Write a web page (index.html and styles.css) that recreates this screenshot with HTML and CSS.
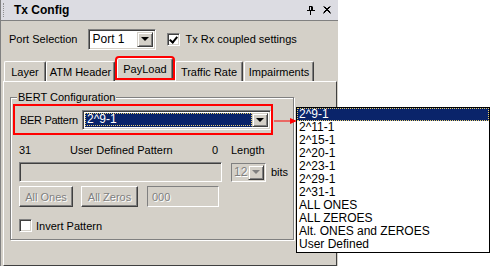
FILE: index.html
```html
<!DOCTYPE html>
<html lang="en">
<head>
    <meta charset="UTF-8">
    <title>Tx Config</title>
    <link rel="stylesheet" href="styles.css">
</head>
<body>
    <div class="panel">
        <div class="titlebar">
            <span class="grip"></span>
            <span class="title">Tx Config</span>
            <svg class="pin" width="8" height="9" viewBox="0 0 8 9">
                <path d="M2 0.5h3M2.5 0.5v4M4.5 0.5v4M5.5 0.5v4M0 4.5h8M3.5 5v4" stroke="#000" fill="none"/>
            </svg>
            <svg class="close" width="8" height="8" viewBox="0 0 8 8">
                <path d="M0.5 0.5l7 7M0.5 7.5l7-7M1.5 0.5l6 6M0.5 6.5l6-6" stroke="#000" fill="none"/>
            </svg>
        </div>

        <div class="port-row">
            <span>Port Selection</span>
            <div class="combo port-combo">
                <span class="combo-text">Port 1</span>
                <span class="combo-btn"><i class="arrow"></i></span>
            </div>
            <span class="check checked"></span>
            <span class="check-label">Tx Rx coupled settings</span>
        </div>

        <div class="tabs">
            <span class="tab tab-layer">Layer</span>
            <span class="tab tab-atm">ATM Header</span>
            <span class="tab active">PayLoad</span>
            <span class="tab tab-traffic">Traffic Rate</span>
            <span class="tab tab-imp">Impairments</span>
        </div>

        <div class="tab-page">
            <div class="group">
                <span class="caption">BERT Configuration</span>

                <div class="ber-row">
                    <span class="ber-label">BER Pattern</span>
                    <div class="combo ber-combo">
                        <span class="combo-text selected"><span class="focus">2^9-1</span></span>
                        <span class="combo-btn"><i class="arrow"></i></span>
                    </div>
                </div>

                <div class="label-row">
                    <span class="c-31">31</span>
                    <span class="c-udp">User Defined Pattern</span>
                    <span class="c-0">0</span>
                    <span>Length</span>
                </div>

                <div class="field-row">
                    <div class="field pattern-field"></div>
                    <div class="combo len-combo disabled">
                        <span class="combo-text">12</span>
                        <span class="combo-btn"><i class="arrow"></i></span>
                    </div>
                    <span class="bits">bits</span>
                </div>

                <div class="button-row">
                    <span class="btn disabled btn-ones">All Ones</span>
                    <span class="btn disabled btn-zeros">All Zeros</span>
                    <div class="field hex-field disabled">000</div>
                </div>

                <div class="invert-row">
                    <span class="check"></span>
                    <span class="check-label">Invert Pattern</span>
                </div>
            </div>
        </div>
    </div>

    <svg class="pointer" width="24" height="8" viewBox="0 0 24 8">
        <path d="M0 4h18" stroke="#f00" stroke-width="1"/>
        <path d="M16 1l7 3-7 3z" fill="#f00"/>
    </svg>

    <ul class="droplist">
        <li class="sel"><span class="focus">2^9-1</span></li>
        <li>2^11-1</li>
        <li>2^15-1</li>
        <li>2^20-1</li>
        <li>2^23-1</li>
        <li>2^29-1</li>
        <li>2^31-1</li>
        <li>ALL ONES</li>
        <li>ALL ZEROES</li>
        <li>Alt. ONES and ZEROES</li>
        <li>User Defined</li>
    </ul>
</body>
</html>
```

FILE: styles.css
```css
body {
    margin: 0;
    width: 491px;
    height: 268px;
    overflow: hidden;
    background: #fff;
    font-family: "Liberation Sans", Arial, sans-serif;
    font-size: 11px;
    color: #000;
    white-space: nowrap;
    position: relative;
}
.panel {
    width: 338px;
    height: 266px;
    background: #d4d0c8;
    box-sizing: border-box;
    border-left: 1px solid #808080;
}
.titlebar {
    height: 20px;
    background: #dcdce2;
    border-bottom: 1px solid #808080;
    display: flex;
    align-items: center;
}
.grip {
    width: 1px;
    height: 14px;
    margin-left: 2px;
    border-left: 1px dotted #909090;
}
.title {
    margin-left: 9px;
    font-weight: bold;
    font-size: 12px;
}
.pin {
    margin-left: auto;
    margin-right: 8px;
}
.close {
    margin-right: 7px;
}
.port-row {
    height: 36px;
    display: flex;
    align-items: center;
    padding-left: 8px;
}
.combo {
    display: flex;
    box-sizing: border-box;
    background: #fff;
    border: 1px solid;
    border-color: #808080 #fff #fff #808080;
    box-shadow: inset 1px 1px #404040, inset -1px -1px #d4d0c8;
    padding: 2px;
}
.combo-text {
    flex: 1;
    display: flex;
    align-items: center;
    padding-left: 1px;
}
.combo-btn {
    width: 16px;
    box-sizing: border-box;
    background: #d4d0c8;
    border: 1px solid;
    border-color: #d4d0c8 #404040 #404040 #d4d0c8;
    box-shadow: inset 1px 1px #fff, inset -1px -1px #808080;
    display: flex;
    align-items: center;
    justify-content: center;
}
.arrow {
    width: 0;
    height: 0;
    border-left: 4px solid transparent;
    border-right: 4px solid transparent;
    border-top: 4px solid #000;
}
.port-combo {
    width: 68px;
    height: 21px;
    margin-left: 11px;
    font-size: 12px;
}
.check {
    width: 13px;
    height: 13px;
    box-sizing: border-box;
    background: #fff;
    border: 1px solid;
    border-color: #808080 #fff #fff #808080;
    box-shadow: inset 1px 1px #404040, inset -1px -1px #d4d0c8;
    position: relative;
}
.port-row .check {
    margin-left: 11px;
}
.checked::after {
    content: "";
    position: absolute;
    left: 2px;
    top: 1px;
    width: 3px;
    height: 6px;
    border: solid #000;
    border-width: 0 2px 2px 0;
    transform: translate(1px, 0) rotate(40deg);
}
.check-label {
    margin-left: 5px;
}
.tabs {
    height: 24px;
    display: flex;
    align-items: flex-end;
    padding-left: 3px;
}
.tab {
    height: 20px;
    box-sizing: border-box;
    display: flex;
    align-items: center;
    justify-content: center;
    border-top: 1px solid #fff;
    border-left: 1px solid #fff;
    border-right: 1px solid #404040;
    box-shadow: inset -1px 0 #808080;
    border-radius: 2px 2px 0 0;
}
.tab-layer { width: 42px; }
.tab-atm { width: 69px; }
.tab-traffic { width: 68px; margin-left: 1px; }
.tab-imp { width: 70px; margin-left: 1px; }
.tab.active {
    width: 56px;
    height: 20px;
    margin: 0 1px 3px 2px;
    outline: 2px solid #f00;
    outline-offset: 0;
}
.tab-page {
    height: 185px;
    margin: 0 1px 0 2px;
    box-sizing: border-box;
    border-top: 1px solid #fff;
    border-left: 1px solid #fff;
    border-right: 1px solid #404040;
    border-bottom: 1px solid #404040;
    padding: 15px 0 0 6px;
}
.group {
    width: 284px;
    height: 143px;
    box-sizing: border-box;
    border: 1px solid #808080;
    box-shadow: inset 1px 1px #fff, 1px 1px #fff;
    display: flex;
    flex-direction: column;
    align-items: flex-start;
}
.caption {
    margin: -7px 0 0 6px;
    padding: 0 1px;
    line-height: 13px;
    background: #d4d0c8;
}
.ber-row {
    width: 260px;
    height: 31px;
    margin-left: 2px;
    box-sizing: border-box;
    border: 2px solid #f00;
    display: flex;
    align-items: center;
    padding-left: 5px;
}
.ber-label {
    letter-spacing: -0.3px;
}
.ber-combo {
    width: 189px;
    height: 20px;
    margin-left: auto;
    font-size: 12px;
}
.selected {
    background: #0a246a;
    color: #fff;
    padding: 0;
}
.focus {
    display: block;
    width: 100%;
    box-sizing: border-box;
    border: 1px dotted #e8d070;
    padding-left: 1px;
    line-height: 11px;
}
.label-row {
    display: flex;
    height: 13px;
    line-height: 13px;
    margin-top: 9px;
    padding-left: 8px;
}
.c-31 { width: 51px; }
.c-udp { width: 142px; }
.c-0 { width: 19px; }
.field-row {
    display: flex;
    align-items: center;
    margin-top: 5px;
    padding-left: 8px;
}
.field {
    box-sizing: border-box;
    border: 1px solid;
    border-color: #808080 #fff #fff #808080;
    box-shadow: inset 1px 1px #404040, inset -1px -1px #d4d0c8;
}
.pattern-field {
    width: 203px;
    height: 20px;
}
.len-combo {
    width: 35px;
    height: 19px;
    margin-left: 9px;
    background: #d4d0c8;
    box-shadow: none;
    border-color: #808080 #fff #fff #808080;
    padding: 1px;
    font-size: 12px;
}
.disabled {
    color: #808080;
    text-shadow: 1px 1px #fff;
}
.len-combo .arrow {
    border-top-color: #808080;
}
.bits {
    margin-left: 5px;
}
.button-row {
    display: flex;
    margin-top: 4px;
    padding-left: 8px;
}
.btn {
    height: 21px;
    box-sizing: border-box;
    display: flex;
    align-items: center;
    justify-content: center;
    border: 1px solid;
    border-color: #fff #404040 #404040 #fff;
    box-shadow: inset -1px -1px #808080;
}
.btn-ones { width: 54px; }
.btn-zeros { width: 57px; margin-left: 8px; }
.hex-field {
    width: 72px;
    height: 21px;
    margin-left: 9px;
    box-shadow: none;
    display: flex;
    align-items: center;
    padding-left: 4px;
}
.invert-row {
    display: flex;
    align-items: center;
    margin-top: 12px;
    padding-left: 8px;
}
.invert-row .check-label {
    margin-left: 4px;
}
.pointer {
    position: absolute;
    left: 274px;
    top: 117px;
}
.droplist {
    position: absolute;
    left: 296px;
    top: 107px;
    width: 194px;
    height: 146px;
    margin: 0;
    padding: 0;
    list-style: none;
    box-sizing: border-box;
    border: 1px solid #000;
    background: #fff;
    font-size: 12px;
}
.droplist li {
    height: 13px;
    line-height: 13px;
    padding-left: 2px;
}
.droplist li.sel {
    padding-left: 0;
    background: #0a246a;
    color: #fff;
}
```
